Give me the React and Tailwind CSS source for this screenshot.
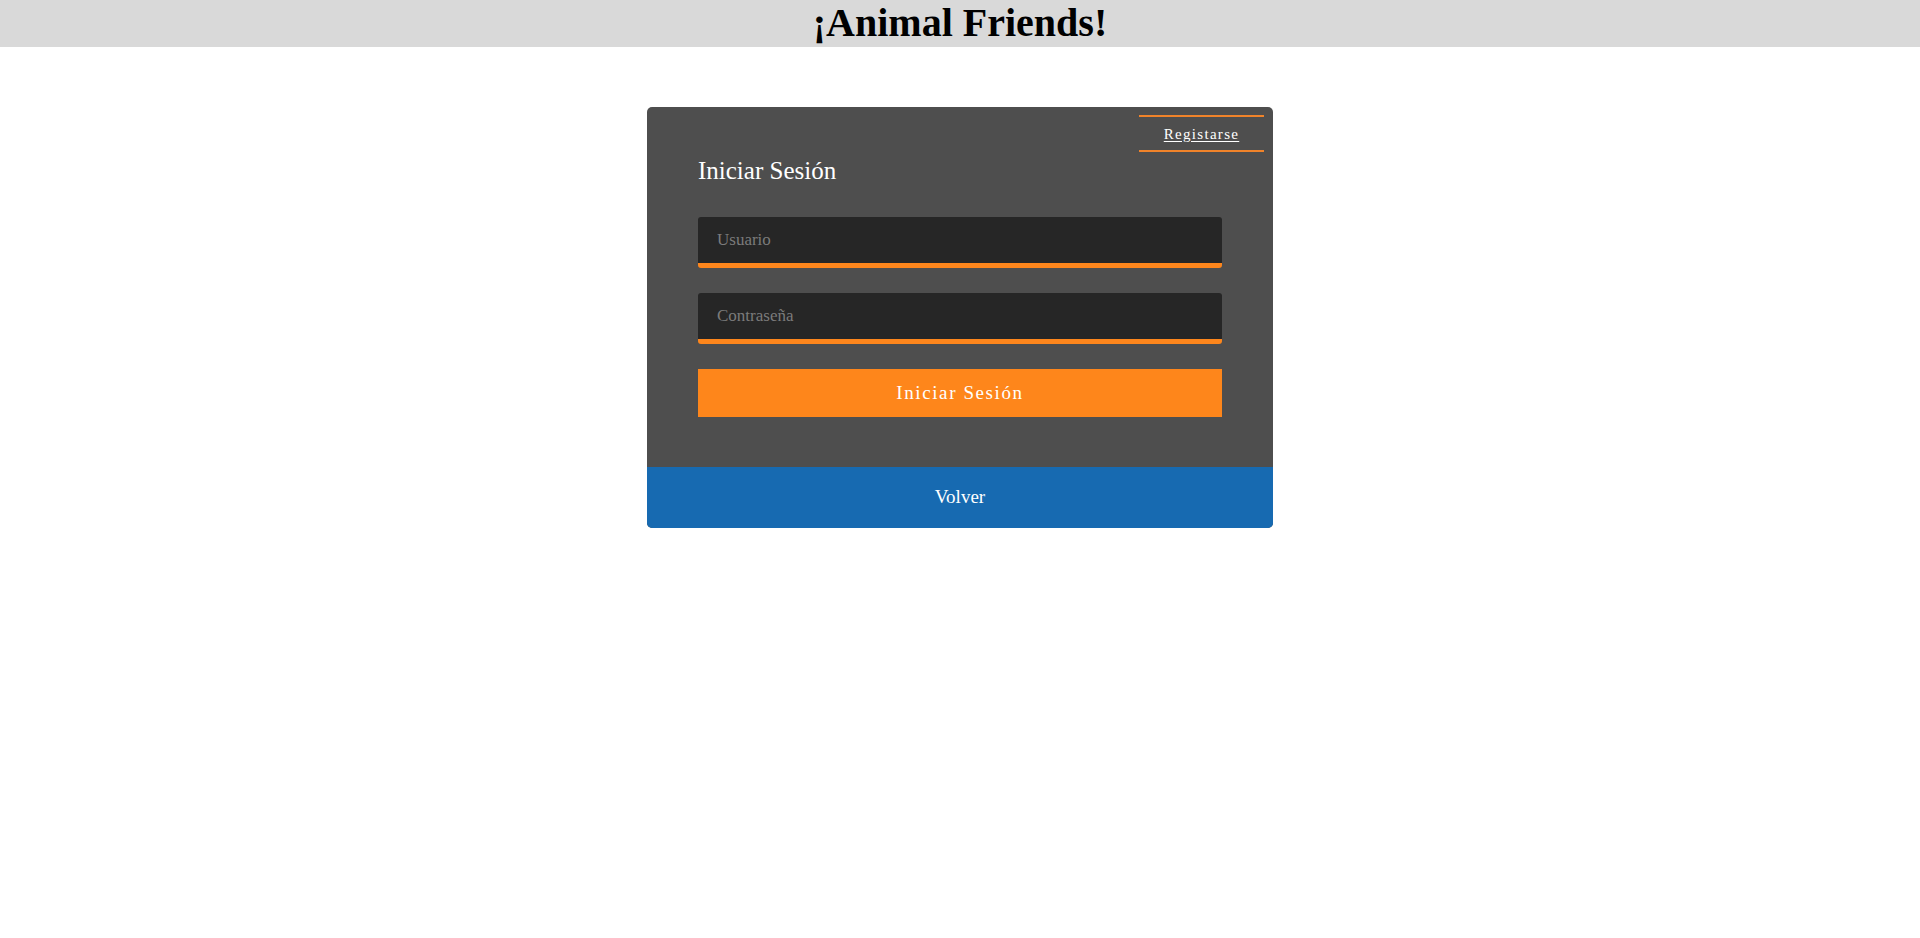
import React, { useState } from 'react';

function Header() {
  return (
    <header className="h-[47px] overflow-visible bg-[#d9d9d9]">
      <h1 className="text-center text-[40px] font-bold leading-[46px] text-black">¡Animal Friends!</h1>
    </header>
  );
}

function Field({ type, placeholder, value, onChange }) {
  return (
    <input
      type={type}
      placeholder={placeholder}
      value={value}
      onChange={onChange}
      className="block h-[51px] w-full rounded-[3px] border-b-[5px] border-[#fd861c] bg-[#262626] px-[19px] text-[17px] text-white outline-none placeholder:text-[#7b7b7b]"
    />
  );
}

export default function App() {
  const [user, setUser] = useState('');
  const [pass, setPass] = useState('');

  return (
    <div className="min-h-[938px] bg-white font-['Liberation_Serif','Times_New_Roman',serif]">
      <Header />

      <div className="relative mx-auto mt-[60px] w-[626px] overflow-hidden rounded-[5px] bg-[#4e4e4e]">
        {/* Registrarse link */}
        <a
          href="#"
          className="absolute right-[9px] top-[8px] flex h-[37px] w-[125px] items-center justify-center border-y-2 border-[#f0832a] pt-[1px] text-[15px] tracking-[1.3px] text-white underline underline-offset-2"
        >
          Registarse
        </a>

        <div className="px-[51px] pb-[50px] pt-[49px]">
          <h2 className="text-[25px] leading-[29px] text-white">Iniciar Sesión</h2>

          <form className="mt-[32px] flex flex-col gap-[25px]" onSubmit={(e) => e.preventDefault()}>
            <Field type="text" placeholder="Usuario" value={user} onChange={(e) => setUser(e.target.value)} />
            <Field type="password" placeholder="Contraseña" value={pass} onChange={(e) => setPass(e.target.value)} />
            <button
              type="submit"
              className="h-[48px] w-full bg-[#fe861b] text-[19px] tracking-[1.6px] text-white"
            >
              Iniciar Sesión
            </button>
          </form>
        </div>

        <button className="flex h-[61px] w-full items-center justify-center bg-[#176ab1] text-[19px] text-white">
          Volver
        </button>
      </div>
    </div>
  );
}
